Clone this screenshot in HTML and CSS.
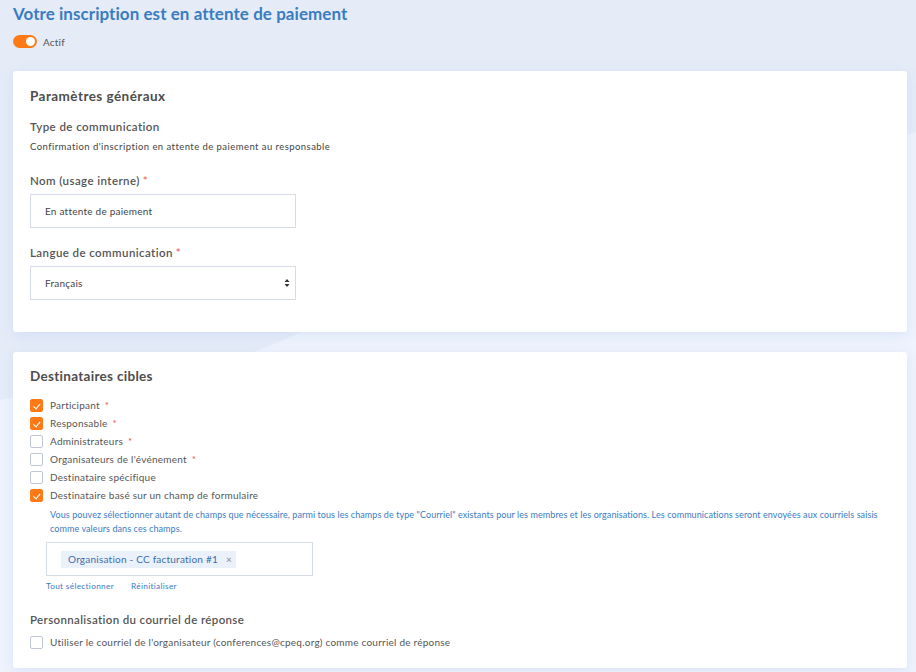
FILE: index.html
```html
<!DOCTYPE html>
<html lang="fr">
<head>
<meta charset="utf-8">
<title>Votre inscription est en attente de paiement</title>
<link rel="stylesheet" href="styles.css">
</head>
<body>
<svg class="bg-deco" width="916" height="672" viewBox="0 0 916 672" aria-hidden="true">
  <path d="M0 0 H916 V132 L301 332 Q280 342 253 352 L0 400 Z" fill="#e5ecf8"/>
</svg>
<main class="page">
  <h1 class="page-title">Votre inscription est en attente de paiement</h1>
  <div class="status">
    <span class="toggle"><span class="knob"></span></span>
    <span class="status-label">Actif</span>
  </div>

  <section class="card card-general">
    <h2 class="card-title">Paramètres généraux</h2>
    <div class="field">
      <div class="label">Type de communication</div>
      <div class="value">Confirmation d'inscription en attente de paiement au responsable</div>
    </div>
    <div class="field">
      <div class="label">Nom (usage interne)<span class="req">*</span></div>
      <div class="input">En attente de paiement</div>
    </div>
    <div class="field">
      <div class="label">Langue de communication<span class="req">*</span></div>
      <div class="input select">Français
        <svg class="arrows" width="6" height="10" viewBox="0 0 6 10"><path d="M3 1 L5.5 4 H0.5 Z M3 9 L5.5 6 H0.5 Z" fill="#333"/></svg>
      </div>
    </div>
  </section>

  <section class="card card-targets">
    <h2 class="card-title">Destinataires cibles</h2>
    <ul class="checks">
      <li><span class="cb on"></span>Participant<span class="req">*</span></li>
      <li><span class="cb on"></span>Responsable<span class="req">*</span></li>
      <li><span class="cb"></span>Administrateurs<span class="req">*</span></li>
      <li><span class="cb"></span>Organisateurs de l'événement<span class="req">*</span></li>
      <li><span class="cb"></span>Destinataire spécifique</li>
      <li><span class="cb on"></span>Destinataire basé sur un champ de formulaire</li>
    </ul>
    <div class="sub">
      <p class="help">Vous pouvez sélectionner autant de champs que nécessaire, parmi tous les champs de type "Courriel" existants pour les membres et les organisations. Les communications seront envoyées aux courriels saisis comme valeurs dans ces champs.</p>
      <div class="tagbox"><span class="tag">Organisation - CC facturation #1<span class="x">×</span></span></div>
      <div class="links"><a>Tout sélectionner</a><a>Réinitialiser</a></div>
    </div>
    <div class="label reply-title">Personnalisation du courriel de réponse</div>
    <ul class="checks">
      <li><span class="cb"></span>Utiliser le courriel de l'organisateur (conferences@cpeq.org) comme courriel de réponse</li>
    </ul>
  </section>
</main>
</body>
</html>
```
FILE: styles.css
```css
* { box-sizing: border-box; }
html, body { margin: 0; padding: 0; }
body {
  width: 916px;
  height: 672px;
  overflow: hidden;
  background: #eef3fd;
  font-family: "Lato", "Open Sans", sans-serif;
  color: #505050;
  position: relative;
}
.bg-deco { position: absolute; left: 0; top: 0; z-index: 0; }
.page {
  position: relative;
  z-index: 1;
  padding: 3px 9px 0 13px;
  display: flex;
  flex-direction: column;
}
.page-title {
  margin: 0;
  font-size: 17px;
  font-weight: 700;
  color: #3a7cc0;
  line-height: 22px;
  letter-spacing: 0.05px;
}
.status {
  display: flex;
  align-items: center;
  gap: 6px;
  margin-top: 10px;
  height: 13px;
}
.toggle {
  width: 24px;
  height: 13px;
  border-radius: 7px;
  background: #ff7a17;
  position: relative;
}
.knob {
  position: absolute;
  right: 2px;
  top: 2px;
  width: 9px;
  height: 9px;
  border-radius: 50%;
  background: #fff;
}
.status-label { font-size: 10px; color: #555; letter-spacing: 0.2px; }
.card {
  background: #fff;
  border-radius: 3px;
  box-shadow: 0 3px 14px rgba(90, 130, 210, 0.13);
  padding: 16px 17px;
  display: flex;
  flex-direction: column;
}
.card-general { margin-top: 23px; height: 261px; padding-top: 16px; }
.card-targets { margin-top: 20px; height: 316px; padding-top: 15px; }
.card-title {
  margin: 0;
  font-size: 13.5px;
  font-weight: 700;
  color: #4d4d4d;
  line-height: 18px;
}
.card-general .card-title { letter-spacing: 0.45px; }
.card-targets .card-title { letter-spacing: 0.3px; }
.field { display: flex; flex-direction: column; }
.label {
  font-size: 11.5px;
  font-weight: 600;
  color: #555;
  line-height: 14px;
  letter-spacing: 0.42px;
}
.card-general .field:nth-of-type(1) { margin-top: 15px; }
.card-general .field:nth-of-type(2) { margin-top: 21px; }
.card-general .field:nth-of-type(3) { margin-top: 18px; }
.value { font-size: 9.5px; color: #444; margin-top: 7px; line-height: 12px; letter-spacing: 0.44px; }
.req { color: #e8534d; margin-left: 3px; font-weight: 400; letter-spacing: 0; }
.input {
  margin-top: 6px;
  width: 266px;
  height: 34px;
  border: 1px solid #d5dce8;
  font-size: 10px;
  color: #444;
  padding: 0 14px;
  display: flex;
  align-items: center;
  letter-spacing: 0.23px;
}
.select { justify-content: space-between; padding-right: 5px; }
.checks {
  list-style: none;
  margin: 0;
  padding: 0;
  display: flex;
  flex-direction: column;
}
.card-targets > .checks:first-of-type { margin-top: 11px; }
.checks li {
  display: flex;
  align-items: center;
  height: 18px;
  font-size: 10px;
  color: #555;
  letter-spacing: 0.23px;
}
.checks .req { margin-left: 5px; }
.cb {
  width: 13px;
  height: 13px;
  border: 1px solid #bfc7d6;
  border-radius: 2px;
  margin-right: 7px;
  flex: none;
  position: relative;
  background: #fff;
}
.cb.on { background: #ff7a17; border-color: #ff7a17; }
.cb.on::after {
  content: "";
  position: absolute;
  left: 3.5px;
  top: 2px;
  width: 3px;
  height: 5.5px;
  border: solid #fff;
  border-width: 0 1.6px 1.6px 0;
  transform: rotate(40deg);
}
.sub { padding-left: 16px; display: flex; flex-direction: column; }
.help {
  margin: 4px 0 0 4px;
  font-size: 9px;
  line-height: 14px;
  color: #3b7cc4;
  letter-spacing: 0.08px;
  width: 836px;
}
.tagbox {
  margin-top: 6px;
  width: 267px;
  height: 34px;
  border: 1px solid #d5dce8;
  display: flex;
  align-items: center;
  padding-left: 14px;
}
.tag {
  background: #ebf1fa;
  color: #3c6ea8;
  font-size: 10px;
  height: 17px;
  display: flex;
  align-items: center;
  padding: 0 4px 0 7px;
  letter-spacing: 0.22px;
}
.tag .x { margin-left: 8px; color: #888; font-size: 10px; }
.links { display: flex; gap: 17px; margin-top: 4px; }
.links a { font-size: 8.3px; color: #3b7cc4; line-height: 12px; letter-spacing: 0.3px; }
.reply-title { margin-top: 21px; margin-bottom: 6px; letter-spacing: 0.36px; }
```
